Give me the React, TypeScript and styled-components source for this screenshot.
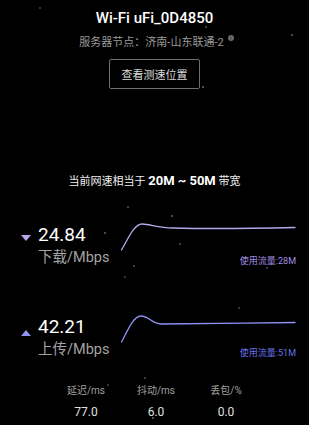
import styled, { createGlobalStyle } from 'styled-components'

const GlobalStyle = createGlobalStyle`
    html, body {
        margin: 0;
        padding: 0;
        background: #000;
    }
    body {
        font-family: Roboto, "Noto Sans CJK SC", sans-serif;
    }
`

const stars = [
    [206, 27, 0.6], [292, 35, 0.7], [203, 87, 0.8], [128, 207, 0.6], [172, 216, 0.7],
    [105, 233, 0.7], [180, 244, 0.6], [134, 266, 0.6], [125, 277, 0.5], [239, 308, 0.5],
    [145, 378, 0.6], [108, 385, 0.5], [153, 418, 0.8], [267, 268, 0.5], [40, 8, 0.5],
]

interface SpeedProps {
    dir: 'down' | 'up'
    value: string
    unit: string
    usage: string
    color: string
    labelColor: string
    path: string
}

const SpeedRow = ({ dir, value, unit, usage, color, labelColor, path }: SpeedProps) => {
    return (
        <Row $top={dir === 'down' ? 2.5 : 2.4}>
            <Left>
                <Triangle $dir={dir} $color={color} />
                <div>
                    <Value>{value}</Value>
                    <Unit>{unit}</Unit>
                </div>
            </Left>
            <ChartCol>
                <svg width="175" height="32" viewBox="0 0 175 32">
                    <path d={path} fill="none" stroke={color} strokeWidth="1.3" strokeLinecap="round" />
                </svg>
                <Usage $color={labelColor} $gap={dir === 'down' ? 3 : 2}>{usage}</Usage>
            </ChartCol>
        </Row>
    )
}

const App = () => {
    return (
        <Page>
            <GlobalStyle />
            <Header>
                <Title>Wi-Fi uFi_0D4850</Title>
                <Server>
                    服务器节点：济南-山东联通-2
                    <InfoDot>i</InfoDot>
                </Server>
                <LocBtn>查看测速位置</LocBtn>
            </Header>

            <Summary>
                当前网速相当于 <b>20M ~ 50M</b> 带宽
            </Summary>

            <SpeedRow
                dir="down"
                value="24.84"
                unit="下载/Mbps"
                usage="使用流量:28M"
                color="#b9a6ee"
                labelColor="#a48fe0"
                path="M0.5 29 C7 18, 13 3, 21 3 C29 3, 37 7, 52 7 C90 8, 130 7.5, 174 6.5"
            />
            <Spacer />
            <SpeedRow
                dir="up"
                value="42.21"
                unit="上传/Mbps"
                usage="使用流量:51M"
                color="#8e92f5"
                labelColor="#6a72ea"
                path="M0.5 28 C6 18, 12 2, 20 2 C28 2, 31 10, 40 10 C80 9.5, 130 9, 174 8.5"
            />

            <Stats>
                <Stat>
                    <StatLabel>延迟/ms</StatLabel>
                    <StatValue>77.0</StatValue>
                </Stat>
                <Stat>
                    <StatLabel>抖动/ms</StatLabel>
                    <StatValue>6.0</StatValue>
                </Stat>
                <Stat>
                    <StatLabel>丢包/%</StatLabel>
                    <StatValue>0.0</StatValue>
                </Stat>
            </Stats>

            <Stars width="309" height="425" viewBox="0 0 309 425">
                {stars.map(([x, y, o], i) => (
                    <circle key={i} cx={x} cy={y} r="0.9" fill="#fff" opacity={o * 0.6} />
                ))}
            </Stars>
        </Page>
    )
}

export default App

const Page = styled.div`
    position: relative;
    width: 309px;
    height: 425px;
    overflow: hidden;
    background: #000;
    color: #fff;
`

const Header = styled.div`
    display: flex;
    flex-direction: column;
    align-items: center;
    padding-top: 9px;
`

const Title = styled.div`
    font-size: 15px;
    font-weight: 500;
    line-height: 18px;
    color: #fff;
`

const Server = styled.div`
    margin-top: 8px;
    position: relative;
    font-size: 11px;
    line-height: 16px;
    color: #9a9a9a;
    padding-right: 6px;
`

const InfoDot = styled.span`
    position: absolute;
    right: -4px;
    top: 0;
    width: 6px;
    height: 6px;
    border-radius: 50%;
    background: #6c6c6c;
    color: #222;
    font-size: 5px;
    line-height: 6px;
    text-align: center;
`

const LocBtn = styled.div`
    margin-top: 8px;
    width: 91px;
    height: 30px;
    box-sizing: border-box;
    border: 1px solid #6e6e6e;
    border-radius: 2px;
    display: flex;
    align-items: center;
    justify-content: center;
    font-size: 11px;
    color: #dcdcdc;
`

const Summary = styled.div`
    margin-top: 84px;
    text-align: center;
    font-size: 11px;
    line-height: 16px;
    color: #f0f0f0;
    b {
        font-family: Roboto, sans-serif;
        font-size: 13px;
        font-weight: 700;
        color: #fff;
    }
`

const Row = styled.div<{ $top: number }>`
    display: grid;
    grid-template-columns: 100px 175px;
    padding-left: 21px;
    margin-top: 31px;
    & > div:first-child {
        padding-top: ${p => p.$top}px;
    }
`

const Spacer = styled.div`
    height: 16px;
`

const Left = styled.div`
    display: flex;
    align-items: flex-start;
    gap: 7px;
`

const Triangle = styled.div<{ $dir: 'down' | 'up'; $color: string }>`
    width: 0;
    height: 0;
    margin-top: ${p => (p.$dir === 'down' ? 11.5 : 14.6)}px;
    border-left: 5px solid transparent;
    border-right: 5px solid transparent;
    ${p => (p.$dir === 'down' ? 'border-top' : 'border-bottom')}: 6px solid ${p => p.$color};
`

const Value = styled.div`
    font-size: 19px;
    line-height: 22px;
    color: #fff;
`

const Unit = styled.div`
    margin-top: 3px;
    font-size: 14.5px;
    line-height: 18px;
    color: #a3a3a3;
`

const ChartCol = styled.div`
    display: flex;
    flex-direction: column;
    align-items: flex-end;
    svg {
        display: block;
    }
`

const Usage = styled.div<{ $color: string; $gap: number }>`
    margin-top: ${p => p.$gap}px;
    font-size: 9px;
    line-height: 10px;
    color: ${p => p.$color};
`

const Stats = styled.div`
    display: grid;
    grid-template-columns: repeat(3, 70px);
    margin: 25px 0 0 51px;
`

const Stat = styled.div`
    display: flex;
    flex-direction: column;
    align-items: center;
`

const StatLabel = styled.div`
    font-size: 10px;
    line-height: 14px;
    color: #a0a0a0;
`

const StatValue = styled.div`
    margin-top: 6px;
    font-size: 12px;
    line-height: 16px;
    color: #e0e0e0;
`

const Stars = styled.svg`
    position: absolute;
    left: 0;
    top: 0;
    pointer-events: none;
`
